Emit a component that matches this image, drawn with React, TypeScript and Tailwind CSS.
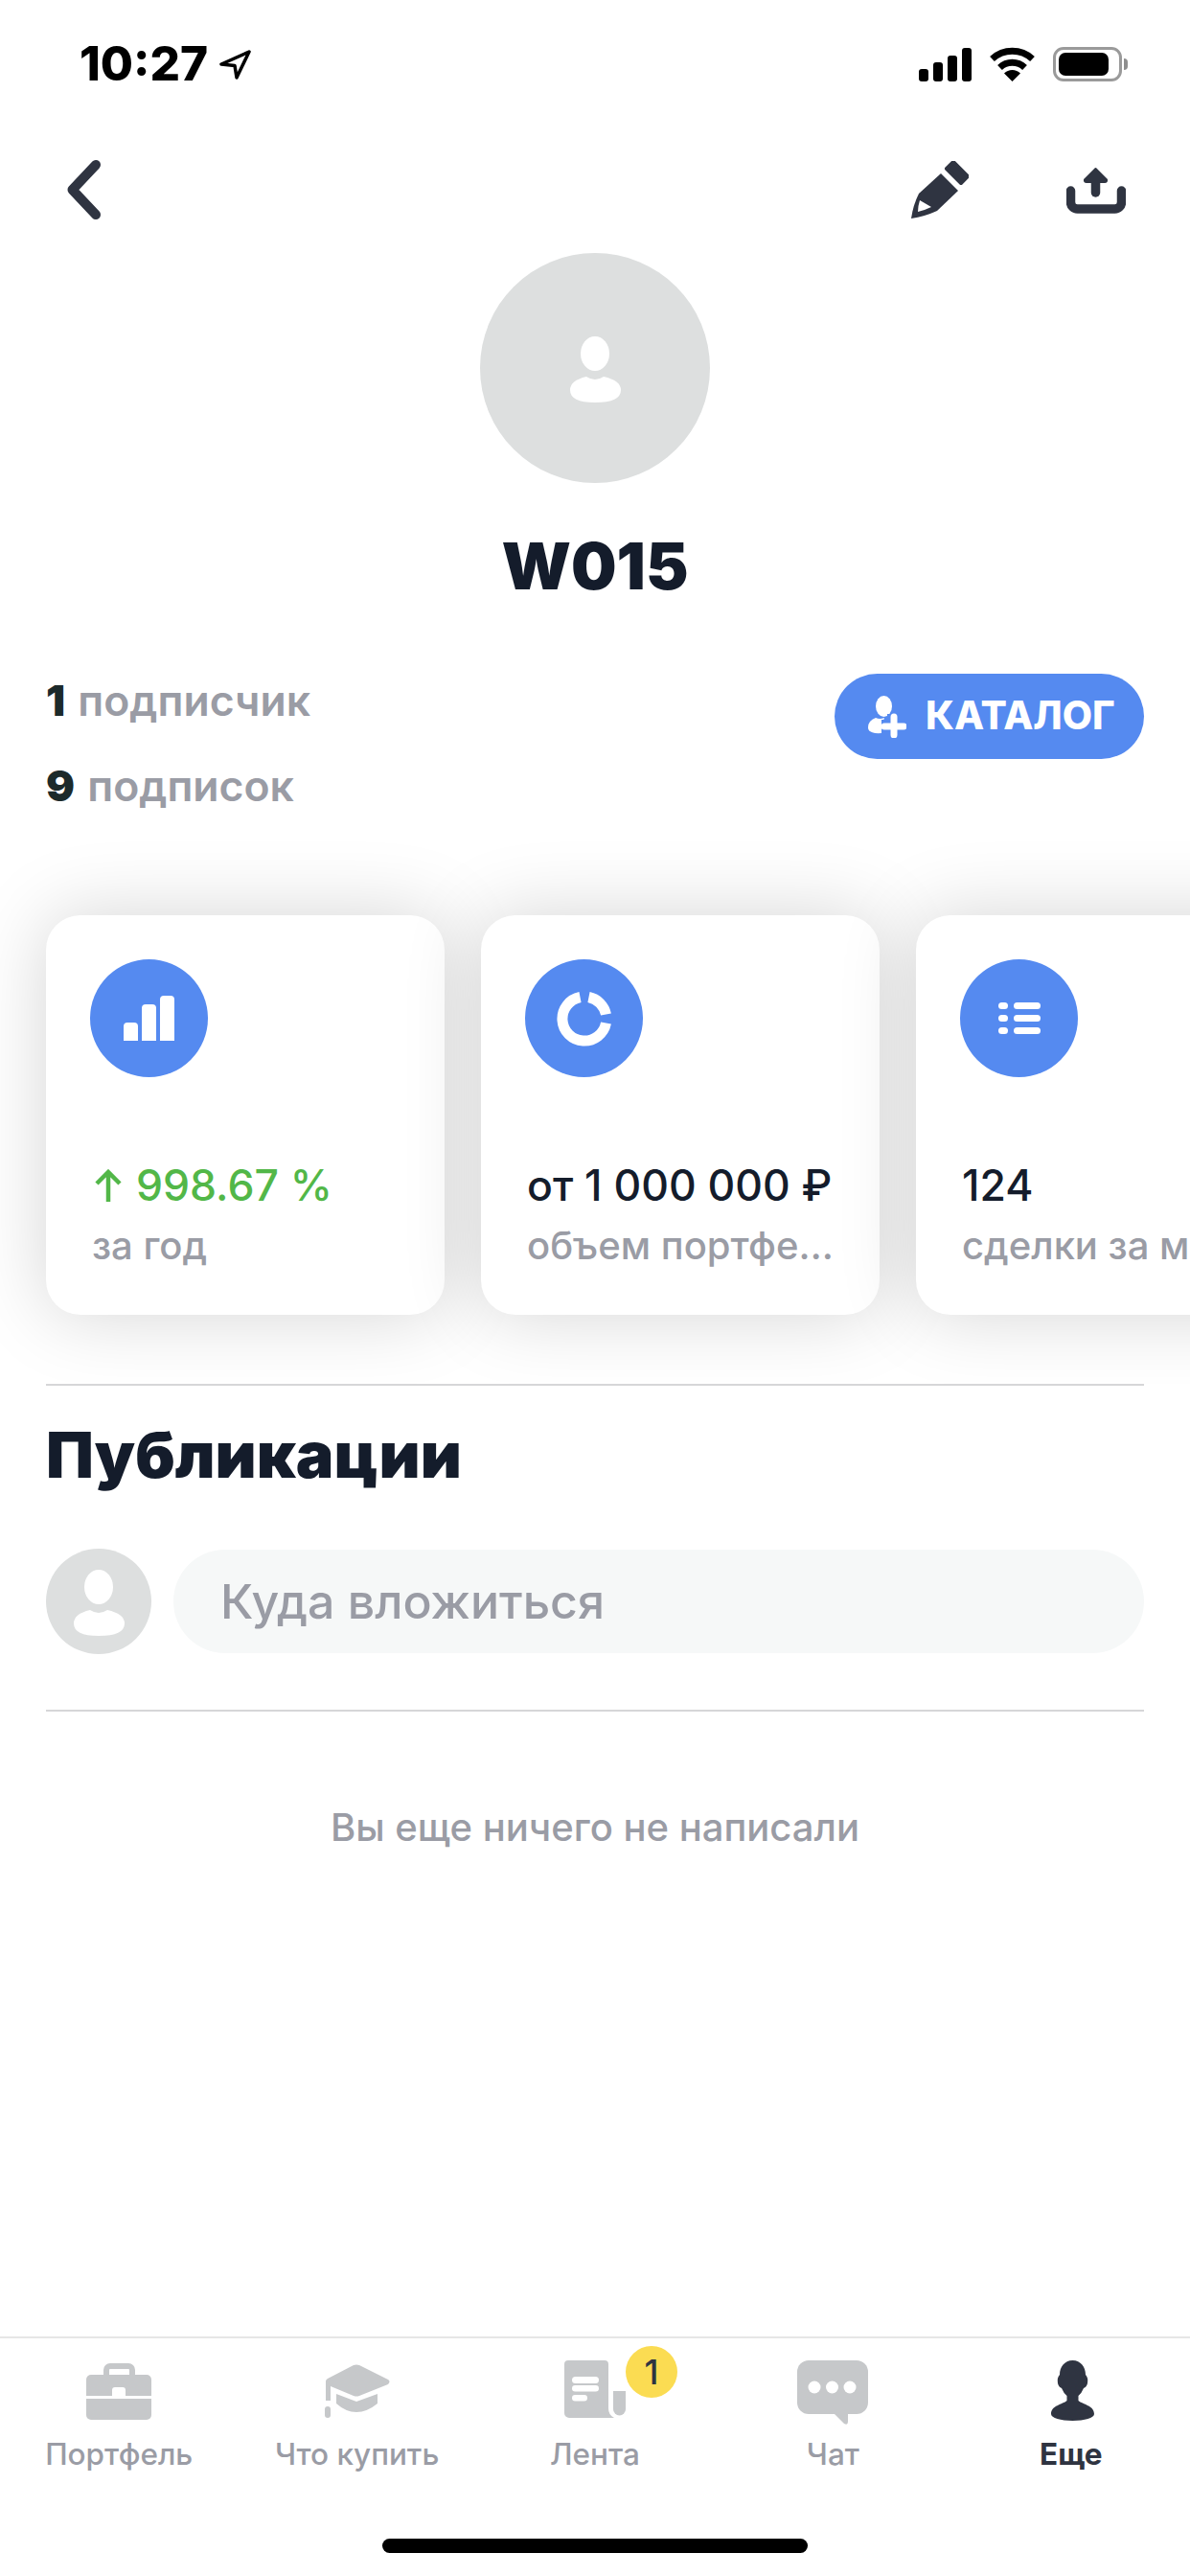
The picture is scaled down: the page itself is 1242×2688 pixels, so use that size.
import type { ReactNode } from "react";

function SignalIcon() {
  return (
    <svg width="55" height="35" viewBox="0 0 55 35" fill="#000">
      <rect x="0" y="22" width="10" height="13" rx="3" />
      <rect x="15" y="15" width="10" height="20" rx="3" />
      <rect x="30" y="8" width="10" height="27" rx="3" />
      <rect x="45" y="0" width="10" height="35" rx="3" />
    </svg>
  );
}

function WifiIcon() {
  return (
    <svg width="47" height="36" viewBox="0 0 47 36" fill="none" stroke="#000" strokeWidth="7">
      <path d="M2.5 12.5A31 31 0 0 1 44.5 12.5" />
      <path d="M10.5 21.5A19 19 0 0 1 36.5 21.5" />
      <path d="M23.5 36L15 27.5A12 12 0 0 1 32 27.5Z" fill="#000" stroke="none" />
    </svg>
  );
}

function BatteryIcon() {
  return (
    <div className="flex items-center">
      <div className="w-[72px] h-[36px] rounded-[11px] border-[3px] border-[#9a9a9a] p-[3px]">
        <div className="w-[52px] h-full rounded-[7px] bg-black" />
      </div>
      <div className="w-[4px] h-[12px] ml-[2px] rounded-r-full bg-[#8e8e8e]" />
    </div>
  );
}

function LocationArrow() {
  return (
    <svg width="33" height="31" viewBox="0 0 33 31" fill="none" stroke="#000" strokeWidth="3.5" strokeLinejoin="round">
      <path d="M31 2L2 15L16 16.5L18 29Z" />
    </svg>
  );
}

function BackIcon() {
  return (
    <svg width="35" height="62" viewBox="0 0 35 62" fill="none" stroke="#2f3441" strokeWidth="10" strokeLinecap="round" strokeLinejoin="round">
      <path d="M30 5L5.500 31L30 57" />
    </svg>
  );
}

function PencilIcon() {
  return (
    <svg width="60" height="60" viewBox="0 0 60 60" fill="#2f3441">
      <path d="M44 1L59 16L52 23L37 8Z" stroke="#2f3441" strokeWidth="4" strokeLinejoin="round" />
      <path d="M31 13L49 31L27 52Q14 58 0 60Q2 46 8 34Z" />
      <path d="M9 41L21 48Q15 51 7 53Q7 47 9 41Z" fill="#fff" />
    </svg>
  );
}

function ShareIcon() {
  return (
    <svg width="62" height="49" viewBox="0 0 62 49" fill="none">
      <path d="M4.500 25V37a7 7 0 0 0 7 7H50.500a7 7 0 0 0 7-7V25" stroke="#2f3441" strokeWidth="9.500" strokeLinecap="round" />
      <path d="M30.500 15V27" stroke="#2f3441" strokeWidth="9.500" strokeLinecap="round" />
      <path d="M30.500 2L42 13.500Q42.500 16 40 16H21Q18.500 16 19 13.500Z" fill="#2f3441" stroke="#2f3441" strokeWidth="2" strokeLinejoin="round" />
    </svg>
  );
}

function UserGlyph() {
  return (
    <svg width="110" height="110" viewBox="0 0 110 110" fill="#fff">
      <ellipse cx="55" cy="40" rx="15" ry="18" />
      <path d="M46 64Q55 70 64 64Q82 68 82 78Q82 91 55 91Q29 91 29 78Q29 68 46 64Z" />
    </svg>
  );
}

function AddUserIcon() {
  return (
    <svg width="40" height="44" viewBox="0 0 40 44">
      <ellipse cx="16.500" cy="11" rx="8.500" ry="11" fill="#fff" />
      <path d="M8 23Q12 25 17 23L14 32V39Q0 40 0 33Q0 26 8 23Z" fill="#fff" />
      <path d="M27 19V44M14 32H40" stroke="#558af0" strokeWidth="14" />
      <path d="M27 22V41M17 32H37" stroke="#fff" strokeWidth="7" strokeLinecap="round" />
    </svg>
  );
}

function BarsIcon() {
  return (
    <svg width="53" height="47" viewBox="0 0 53 47" fill="#fff">
      <path d="M0 47V32a4 4 0 0 1 4-4h7a4 4 0 0 1 4 4V47Z" />
      <path d="M19 47V13a4 4 0 0 1 4-4h7a4 4 0 0 1 4 4V47Z" />
      <path d="M38 47V4a4 4 0 0 1 4-4h7a4 4 0 0 1 4 4V47Z" />
    </svg>
  );
}

function RingIcon() {
  return (
    <svg width="58" height="58" viewBox="0 0 58 58" fill="none" stroke="#fff" strokeWidth="11">
      <path d="M33.500 6.500A23 23 0 0 1 51.500 24.500" />
      <path d="M51.500 33.500A23 23 0 1 1 24.500 6.500" />
    </svg>
  );
}

function ListIcon() {
  return (
    <svg width="44" height="33" viewBox="0 0 44 33" fill="#fff">
      <rect x="0" y="0" width="10" height="7" rx="3.500" />
      <rect x="16" y="0" width="28" height="7" rx="3.500" />
      <rect x="0" y="13" width="10" height="7" rx="3.500" />
      <rect x="16" y="13" width="28" height="7" rx="3.500" />
      <rect x="0" y="26" width="10" height="7" rx="3.500" />
      <rect x="16" y="26" width="28" height="7" rx="3.500" />
    </svg>
  );
}

function BriefcaseIcon() {
  return (
    <svg className="mt-[4px]" width="68" height="59" viewBox="0 0 68 59" fill="#c6c8ca">
      <path d="M21 13V7a4 4 0 0 1 4-4H44a4 4 0 0 1 4 4V13" fill="none" stroke="#c6c8ca" strokeWidth="6" />
      <rect x="0" y="12" width="68" height="47" rx="5" />
      <rect x="0" y="34" width="68" height="3" fill="#fff" />
      <rect x="27" y="25" width="14" height="12" rx="3" fill="#fff" />
    </svg>
  );
}

function CapIcon() {
  return (
    <svg className="mt-[5px]" width="68" height="56" viewBox="0 0 68 56" fill="#c6c8ca">
      <path d="M30 1Q33 0 36 1L66 16Q69 18 66 21L36 33Q33 34 30 33L6 23V38H1V18Q1 16 3 15Z" />
      <path d="M12 31L33 39L55 31V41Q44 50 33 50Q22 50 12 41Z" />
      <rect x="0" y="44" width="6" height="12" rx="3" />
    </svg>
  );
}

function FeedIcon() {
  return (
    <svg className="mt-[1px]" width="64" height="60" viewBox="0 0 64 60" fill="#c6c8ca">
      <path d="M4 0H42a4 4 0 0 1 4 4V50Q46 57 52 60H5a5 5 0 0 1-5-5V4a4 4 0 0 1 4-4Z" />
      <path d="M51 32H64V51a6.500 6.500 0 0 1-13 0Z" />
      <rect x="8" y="17" width="28" height="7" rx="3.500" fill="#fff" />
      <rect x="8" y="26" width="28" height="6.500" rx="3.250" fill="#fff" />
      <rect x="8" y="36" width="16" height="6.500" rx="3.250" fill="#fff" />
    </svg>
  );
}

function ChatIcon() {
  return (
    <svg className="mt-[1px]" width="74" height="67" viewBox="0 0 74 67" fill="#c6c8ca">
      <rect x="0" y="0" width="74" height="56" rx="12" />
      <path d="M38 55L49 66Q53 68 53 64V55Z" />
      <circle cx="18" cy="28" r="6.500" fill="#fff" />
      <circle cx="36.500" cy="28" r="6.500" fill="#fff" />
      <circle cx="55" cy="28" r="6.500" fill="#fff" />
    </svg>
  );
}

function PersonIcon() {
  return (
    <svg className="mt-[1px] ml-[4px]" width="45" height="63" viewBox="0 0 45 63" fill="#2f3441">
      <path d="M22.500 0C31 0 36 7 36 15Q39 18 38 24Q37 28 34 29Q32 34 28.500 37V42C33 46 45 47 45 56C45 60 35 63 22.500 63C10 63 0 60 0 56C0 47 12 46 16.500 42V37Q13 34 11 29Q8 28 7 24Q6 18 9 15C9 7 14 0 22.500 0Z" />
    </svg>
  );
}

function StatCard({ icon, value, label, green }: { icon: ReactNode; value: ReactNode; label: string; green?: boolean }) {
  return (
    <div className="w-[416px] h-[417px] shrink-0 rounded-[36px] bg-white p-[46px] shadow-[0_0_80px_rgba(0,0,0,0.17)]">
      <div className="w-[123px] h-[123px] rounded-full bg-[#558af0] flex items-center justify-center">
        {icon}
      </div>
      <div className={`mt-[83px] ml-[2px] h-[60px] leading-[60px] text-[44.500px] font-medium whitespace-nowrap ${green ? "text-[#52b748]" : "text-[#141c2b]"}`}>
        {value}
      </div>
      <div className="mt-[8px] ml-[2px] h-[50px] leading-[50px] text-[40px] font-medium text-[#9a9ca5] truncate">
        {label}
      </div>
    </div>
  );
}

const tabs = [
  { label: "Портфель", icon: <BriefcaseIcon /> },
  { label: "Что купить", icon: <CapIcon /> },
  { label: "Лента", icon: <FeedIcon />, badge: "1" },
  { label: "Чат", icon: <ChatIcon /> },
  { label: "Еще", icon: <PersonIcon />, active: true },
];

export default function App() {
  return (
    <div className="w-[1242px] h-[2688px] bg-white flex flex-col overflow-hidden font-['Inter',sans-serif]">
      <div className="flex items-center justify-between h-[36px] mt-[49px] pl-[83px] pr-[65px]">
        <div className="flex items-center gap-[12px]">
          <span className="text-[49.500px] font-extrabold leading-none text-black">10:27</span>
          <LocationArrow />
        </div>
        <div className="flex items-center gap-[19px]">
          <SignalIcon />
          <WifiIcon />
          <BatteryIcon />
        </div>
      </div>

      <div className="flex items-center justify-between h-[62px] mt-[82px] pl-[70px] pr-[67px]">
        <BackIcon />
        <div className="flex items-center gap-[102px]">
          <PencilIcon />
          <ShareIcon />
        </div>
      </div>

      <div className="mt-[35px] mx-auto w-[240px] h-[240px] rounded-full bg-[#dddfdf] flex items-center justify-center">
        <UserGlyph />
      </div>
      <div className="mt-[47px] h-[80px] leading-[80px] text-center text-[67px] font-black text-[#141c2b]">W015</div>

      <div className="mt-[70px] px-[48px] flex items-start justify-between">
        <div className="flex flex-col gap-[29px] text-[44.500px] leading-[60px] font-semibold text-[#9a9ca5]">
          <div>
            <span className="mr-[2px] font-black text-[#1c2a2b]">1</span> подписчик
          </div>
          <div>
            <span className="mr-[2px] font-black text-[#1c2a2b]">9</span> подписок
          </div>
        </div>
        <button className="mt-[2px] w-[323px] h-[89px] rounded-full bg-[#558af0] flex items-center pl-[35px] gap-[20px] text-white text-[40.500px] font-extrabold">
          <AddUserIcon />
          КАТАЛОГ
        </button>
      </div>

      <div className="mt-[15px] pt-[90px] pb-[72px] pl-[48px] flex gap-[38px] overflow-hidden">
        <StatCard
          icon={<BarsIcon />}
          green
          value={
            <span className="flex items-center gap-[14px] ml-[2px]">
              <svg width="30" height="34" viewBox="0 0 30 34" fill="none" stroke="#52b748" strokeWidth="4.500">
                <path d="M15 34V3M3 15L15 3L27 15" />
              </svg>
              998.67 %
            </span>
          }
          label="за год"
        />
        <StatCard icon={<RingIcon />} value="от 1 000 000 ₽" label="объем портфеля" />
        <StatCard icon={<ListIcon />} value="124" label="сделки за месяц" />
      </div>

      <div className="mx-[48px] h-[2px] bg-[#d6d6d8]" />
      <h2 className="mt-[32px] px-[48px] h-[80px] leading-[80px] text-[66.500px] font-black text-[#141c2b]">Публикации</h2>

      <div className="mt-[58px] px-[48px] flex items-center gap-[23px]">
        <div className="w-[110px] h-[110px] shrink-0 rounded-full bg-[#dddfdf]">
          <UserGlyph />
        </div>
        <div className="flex-1 h-[108px] rounded-full bg-[#f6f8f8] pl-[49px] flex items-center text-[50px] font-medium text-[#9a9ca5]">
          Куда вложиться
        </div>
      </div>

      <div className="mt-[58px] mx-[48px] h-[2px] bg-[#d6d6d8]" />
      <div className="mt-[96px] h-[50px] leading-[50px] text-center text-[40px] font-medium text-[#9a9ca5]">
        Вы еще ничего не написали
      </div>

      <div className="flex-1" />

      <div className="h-[250px] border-t-2 border-[#e6e6e6]">
        <div className="grid grid-cols-5 pt-[22px]">
          {tabs.map((tab) => (
            <div key={tab.label} className="flex flex-col items-center">
              <div className="relative h-[70px] flex items-start justify-center">
                {tab.icon}
                {tab.badge && (
                  <div className="absolute left-[64px] top-[-14px] w-[54px] h-[54px] rounded-full bg-[#fbdc52] flex items-center justify-center text-[36px] font-medium text-[#2f3441]">
                    {tab.badge}
                  </div>
                )}
              </div>
              <div className={`mt-[9px] h-[40px] leading-[40px] text-[31.500px] whitespace-nowrap ${tab.active ? "font-bold text-[#2f3441]" : "font-medium text-[#9a9ca5]"}`}>
                {tab.label}
              </div>
            </div>
          ))}
        </div>
        <div className="mt-[68px] mx-auto w-[444px] h-[15px] rounded-full bg-black" />
      </div>
    </div>
  );
}
